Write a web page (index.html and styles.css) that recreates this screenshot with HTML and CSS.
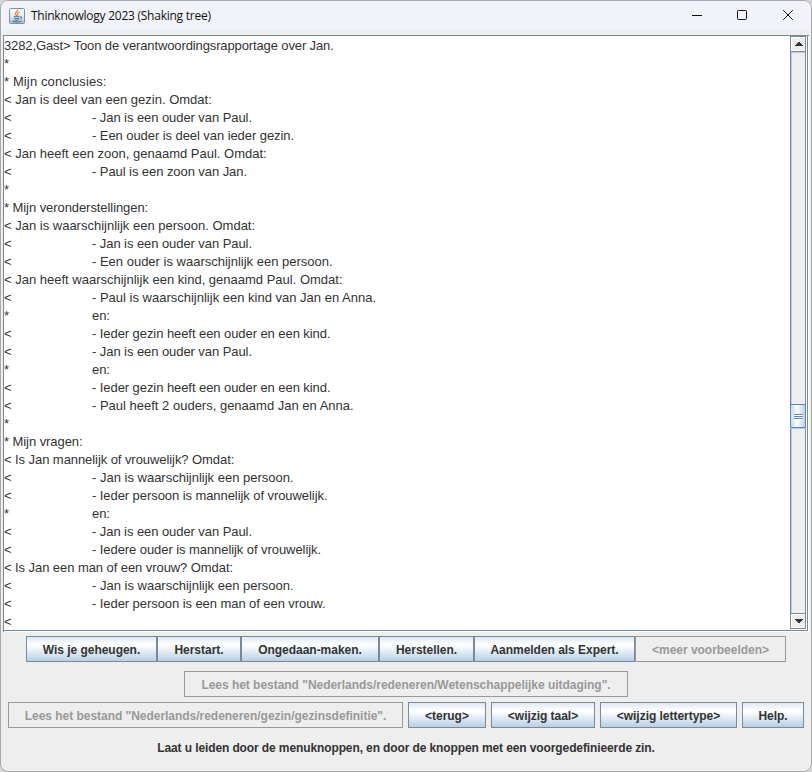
FILE: index.html
```html
<!DOCTYPE html>
<html lang="nl">
<head>
<meta charset="utf-8">
<title>Thinknowlogy 2023 (Shaking tree)</title>
<link rel="stylesheet" href="styles.css">
</head>
<body>
<div class="window">
  <header class="titlebar">
    <svg class="app-icon" width="16" height="16" viewBox="0 0 16 16">
      <defs><linearGradient id="g" x1="0" y1="0" x2="0" y2="1"><stop offset="0" stop-color="#fbfcfd"/><stop offset="0.55" stop-color="#e3eaf0"/><stop offset="1" stop-color="#9fb6c8"/></linearGradient></defs>
      <rect x="0.5" y="0.5" width="15" height="15" rx="1" fill="url(#g)" stroke="#7890a4"/>
      <path d="M8.6 1.8C9.4 3.6 5.5 4.4 6.3 6.2 6.6 7 7.4 7.3 7.6 8M10.4 4.2C8.6 5 7.9 5.6 8.6 6.5 9 7.1 8.7 7.6 8.3 8" fill="none" stroke="#e8833a" stroke-width="1.2"/>
      <path d="M4.6 8.7H10.6M5.2 10.3Q8 11 10.2 10.2M5.6 12Q8 12.5 9.8 11.9M3.4 13.2Q8 14.8 12.6 13.2M11 8.8Q13.3 8.6 12.4 10.1 12 10.8 11 11.1" fill="none" stroke="#4b7594"/>
    </svg>
    <h1 class="title">Thinknowlogy 2023 (Shaking tree)</h1>
    <svg class="controls" width="120" height="30" viewBox="0 0 120 30" fill="none" stroke="#111">
      <path d="M8 14.5H18"/>
      <rect x="53.5" y="9.5" width="9" height="9" rx="1"/>
      <path d="M99.2 9.2L108.8 18.8M108.8 9.2L99.2 18.8"/>
    </svg>
  </header>
  <main class="scroll-pane">
    <div class="output">
      <p class="prompt">3282,Gast&gt; Toon de verantwoordingsrapportage over Jan.</p>
      <p>*</p>
      <p class="loose">* Mijn conclusies:</p>
      <p class="wide">&lt; Jan is deel van een gezin. Omdat:</p>
      <p><b>&lt;</b>- Jan is een ouder van Paul.</p>
      <p><b>&lt;</b>- Een ouder is deel van ieder gezin.</p>
      <p class="wide">&lt; Jan heeft een zoon, genaamd Paul. Omdat:</p>
      <p><b>&lt;</b>- Paul is een zoon van Jan.</p>
      <p>*</p>
      <p>* Mijn veronderstellingen:</p>
      <p class="wide">&lt; Jan is waarschijnlijk een persoon. Omdat:</p>
      <p><b>&lt;</b>- Jan is een ouder van Paul.</p>
      <p class="wide"><b>&lt;</b>- Een ouder is waarschijnlijk een persoon.</p>
      <p class="wide">&lt; Jan heeft waarschijnlijk een kind, genaamd Paul. Omdat:</p>
      <p class="wide"><b>&lt;</b>- Paul is waarschijnlijk een kind van Jan en Anna.</p>
      <p><b>*</b>en:</p>
      <p><b>&lt;</b>- Ieder gezin heeft een ouder en een kind.</p>
      <p><b>&lt;</b>- Jan is een ouder van Paul.</p>
      <p><b>*</b>en:</p>
      <p><b>&lt;</b>- Ieder gezin heeft een ouder en een kind.</p>
      <p class="wide"><b>&lt;</b>- Paul heeft 2 ouders, genaamd Jan en Anna.</p>
      <p>*</p>
      <p>* Mijn vragen:</p>
      <p>&lt; Is Jan mannelijk of vrouwelijk? Omdat:</p>
      <p class="wide"><b>&lt;</b>- Jan is waarschijnlijk een persoon.</p>
      <p><b>&lt;</b>- Ieder persoon is mannelijk of vrouwelijk.</p>
      <p><b>*</b>en:</p>
      <p><b>&lt;</b>- Jan is een ouder van Paul.</p>
      <p><b>&lt;</b>- Iedere ouder is mannelijk of vrouwelijk.</p>
      <p>&lt; Is Jan een man of een vrouw? Omdat:</p>
      <p class="wide"><b>&lt;</b>- Jan is waarschijnlijk een persoon.</p>
      <p><b>&lt;</b>- Ieder persoon is een man of een vrouw.</p>
      <p>&lt;</p>
    </div>
    <div class="scrollbar">
      <div class="arrow up"><svg width="8" height="4"><path d="M0 4V3H1V2H2V1H3V0H5V1H6V2H7V3H8V4Z" fill="#333"/></svg></div>
      <div class="track"><div class="thumb"><i></i><i></i><i></i></div></div>
      <div class="arrow down"><svg width="8" height="4"><path d="M0 0V1H1V2H2V3H3V4H5V3H6V2H7V1H8V0Z" fill="#333"/></svg></div>
    </div>
  </main>
  <div class="row menu">
    <button class="w131">Wis je geheugen.</button><button class="w84">Herstart.</button><button class="w138">Ongedaan-maken.</button><button class="w95">Herstellen.</button><button class="w161">Aanmelden als Expert.</button><button class="w151" disabled>&lt;meer voorbeelden&gt;</button>
  </div>
  <div class="row">
    <button class="w444" disabled>Lees het bestand "Nederlands/redeneren/Wetenschappelijke uitdaging".</button>
  </div>
  <div class="row last">
    <button class="w395" disabled>Lees het bestand "Nederlands/redeneren/gezin/gezinsdefinitie".</button>
    <button class="w78">&lt;terug&gt;</button>
    <button class="w104">&lt;wijzig taal&gt;</button>
    <button class="w137">&lt;wijzig lettertype&gt;</button>
    <button class="w62">Help.</button>
  </div>
  <p class="hint">Laat u leiden door de menuknoppen, en door de knoppen met een voorgedefinieerde zin.</p>
</div>
</body>
</html>
```
FILE: styles.css
```css
* { box-sizing: border-box; }
body { margin: 0; background: #d6d6d6; font-family: "Liberation Sans", Arial, sans-serif; color: #333; }
.window { width: 812px; height: 772px; border: 1px solid #a9a9a9; border-radius: 8px; background: #eee; overflow: hidden; }
.titlebar { height: 30px; display: flex; align-items: center; background: #f1f3f9; padding-left: 8px; }
.app-icon { display: block; margin-top: -1px; }
.title { margin: 0 auto 0 6px; font: 400 12px/16px "Open Sans", sans-serif; letter-spacing: -0.25px; color: #111; white-space: nowrap; }
.controls { display: block; margin-right: 7px; }
.scroll-pane { display: flex; width: 806px; height: 597px; margin: 4px 0 0 2px; border: 1px solid #7a8a99; border-right: 0; border-bottom: 0; background: #fff; box-shadow: inset -1px -1px #fff, inset -2px -2px #7a8a99; }
.output { width: 786px; padding-top: 1px; font-size: 13px; overflow: hidden; }
.output p { margin: 0; height: 18px; line-height: 18px; white-space: pre; letter-spacing: -0.07px; }
.output .wide { letter-spacing: 0; }
.output .loose { letter-spacing: 0.12px; }
.output .prompt { letter-spacing: -0.12px; }
.output b { display: inline-block; width: 88px; font-weight: 400; }
.scrollbar { width: 16px; height: 593px; display: flex; flex-direction: column; border: 1px solid #7a8a99; background: #eee; }
.arrow { height: 14px; display: flex; align-items: center; justify-content: center; border: 1px solid #fff; border-right: 0; padding-left: 1px; flex: none; }
.up svg, .down svg { display: block; }
.track { flex: 1; border-top: 1px solid #7a8a99; border-bottom: 1px solid #7a8a99; padding-top: 352px; box-shadow: inset 1px 1px #b8cfe5; }
.thumb { height: 24px; width: 16px; margin-left: -1px; border: 1px solid #6382bf; background: linear-gradient(90deg, #c8dcee, #fff 45%, #b8cfe5); display: flex; flex-direction: column; align-items: center; padding-top: 9px; box-shadow: 0 1px #b8cfe5; }
.thumb i { width: 9px; height: 2px; border-bottom: 1px solid #fff; background: #6382bf; margin-left: 1px; flex: none; }
.row { display: flex; justify-content: center; gap: 5px; height: 26px; margin-top: 9px; }
.menu { gap: 0; margin-top: 4px; }
.last { margin-top: 5px; }
button { flex: none; height: 26px; margin: 0; padding: 2px 0 0; border: 1px solid #7a8a99; border-radius: 0; background: linear-gradient(#dde8f3 0, #fff 30%, #fff 35%, #b8cfe5 100%); font: bold 12px/22px "Liberation Sans", Arial, sans-serif; letter-spacing: -0.03px; color: #333; white-space: nowrap; text-align: center; }
button:disabled { background: #eee; border-color: #999; color: #999; }
.w131 { width: 131px; }
.w84 { width: 84px; }
.w138 { width: 138px; }
.w95 { width: 95px; }
.w161 { width: 161px; }
.w151 { width: 151px; }
.w444 { width: 444px; }
.w395 { width: 395px; }
.w78 { width: 78px; }
.w104 { width: 104px; }
.w137 { width: 137px; }
.w62 { width: 62px; }
.hint { margin: 12px 0 0; text-align: center; font: bold 12px/16px "Liberation Sans", Arial, sans-serif; letter-spacing: -0.11px; }
```
